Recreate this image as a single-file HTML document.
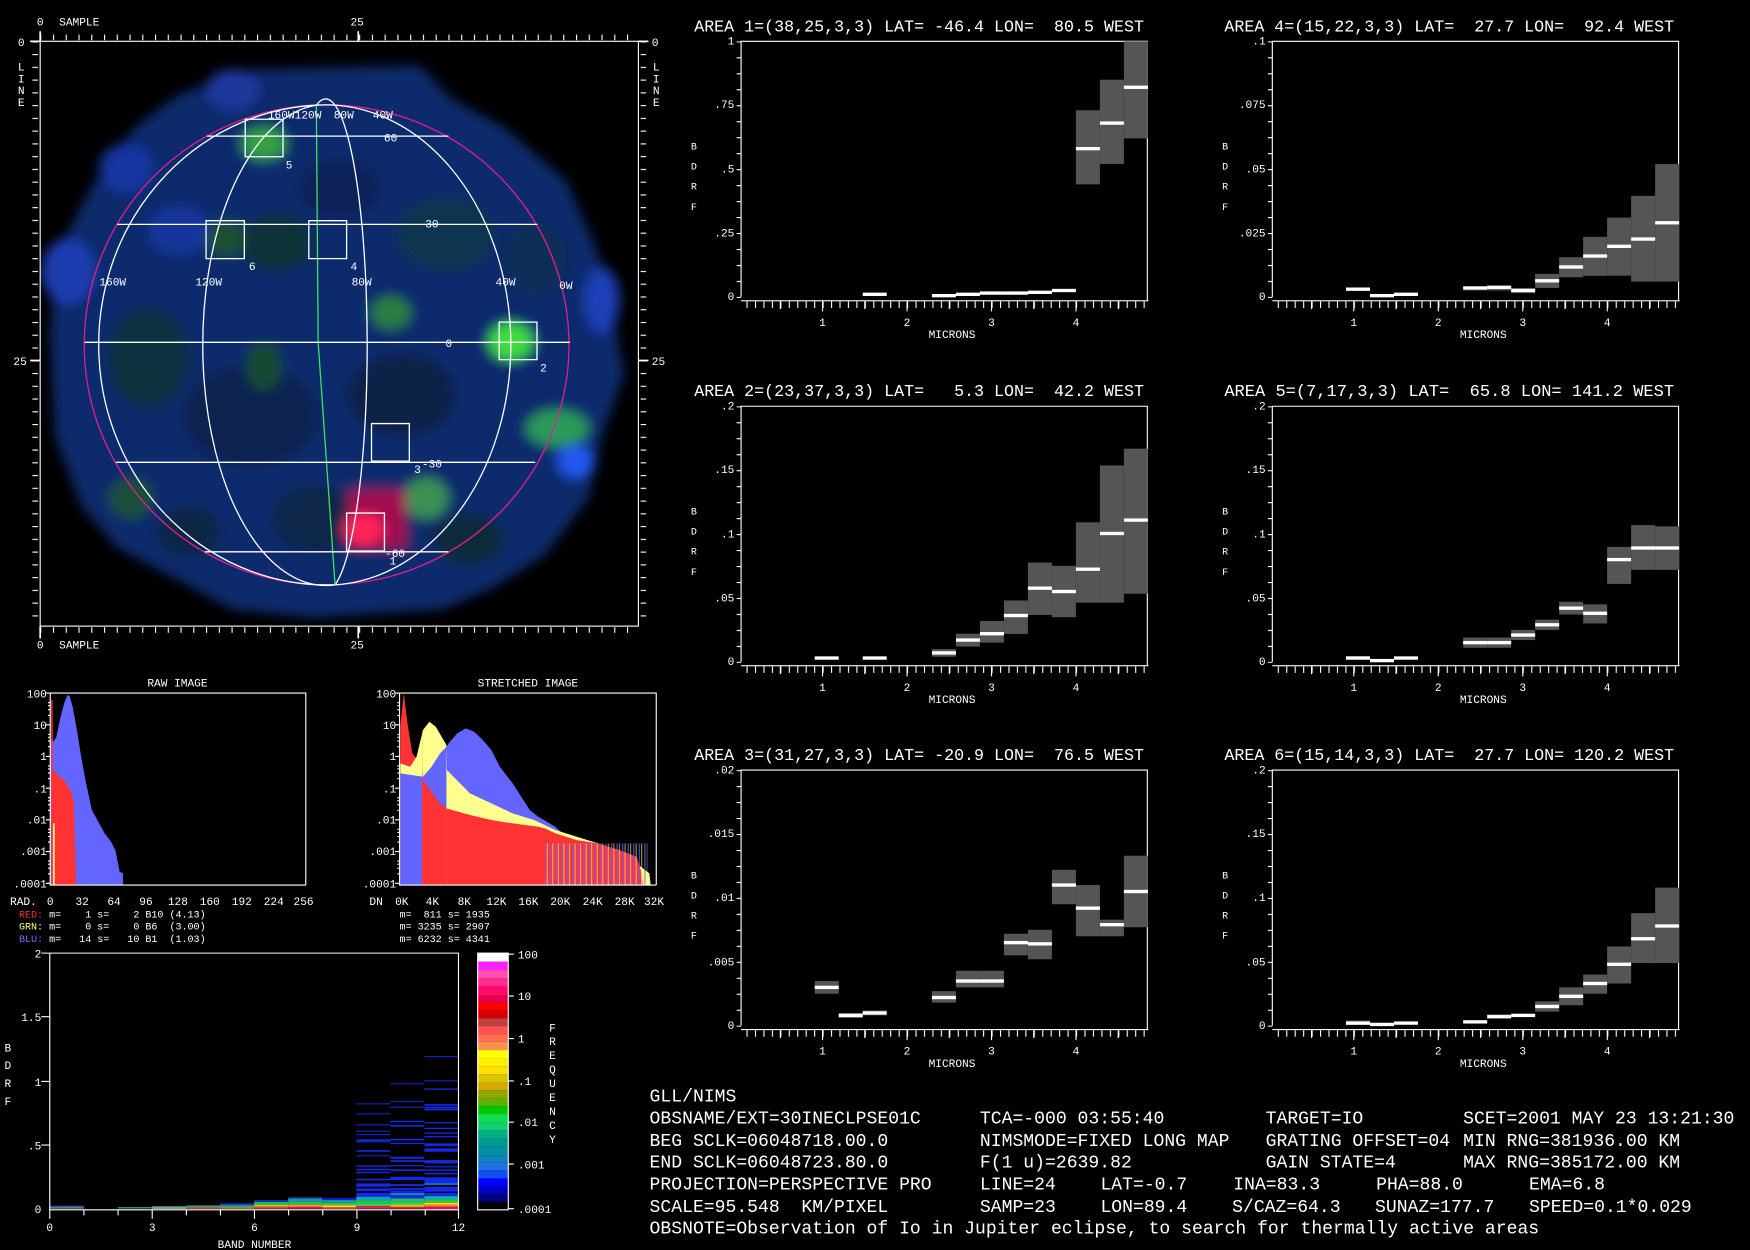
<!DOCTYPE html>
<html><head><meta charset="utf-8"><style>
html,body{margin:0;padding:0;background:#000;width:1750px;height:1250px;overflow:hidden}
svg{display:block}
text{font-family:"Liberation Mono",monospace;fill:#fff;white-space:pre}
.t{font-size:15px}
.s{font-size:10px}
.xs{font-size:9px}
.b{font-size:16.2px}
</style></head><body>
<svg width="1750" height="1250" viewBox="0 0 1568 1120" preserveAspectRatio="none" xmlns="http://www.w3.org/2000/svg">
<defs>
<pattern id="mt" patternUnits="userSpaceOnUse" x="-2.7" y="233" width="7.57" height="10"><rect x="0" y="0" width="1" height="6" fill="#fff"/></pattern>
<pattern id="yt" patternUnits="userSpaceOnUse" x="0" y="0" width="4" height="14.3125"><rect x="0" y="0" width="4" height="1" fill="#fff"/></pattern>
<pattern id="it" patternUnits="userSpaceOnUse" x="36" y="0" width="11.43" height="11.43"><rect x="0" y="0" width="1" height="20" fill="#fff"/></pattern>
<pattern id="il" patternUnits="userSpaceOnUse" x="0" y="37" width="11.43" height="11.43"><rect x="0" y="0" width="20" height="1" fill="#fff"/></pattern>
<pattern id="ht" patternUnits="userSpaceOnUse" x="45" y="0" width="7.15" height="10"><rect x="0" y="0" width="1" height="4" fill="#fff"/></pattern>
<pattern id="ht2" patternUnits="userSpaceOnUse" x="358.5" y="0" width="7.18" height="10"><rect x="0" y="0" width="1" height="4" fill="#fff"/></pattern>
<pattern id="bt" patternUnits="userSpaceOnUse" x="44.6" y="0" width="14.3" height="14.3"><rect x="0" y="0" width="4" height="1" fill="#fff"/></pattern>
<pattern id="nz" patternUnits="userSpaceOnUse" x="0" y="0" width="13" height="10"><rect x="0" y="0" width="3" height="10" fill="#6464ff"/><rect x="6" y="0" width="2" height="10" fill="#ffff90"/></pattern>
<filter id="bl" x="-20%" y="-20%" width="140%" height="140%"><feGaussianBlur stdDeviation="14"/></filter>
<clipPath id="fc"><rect x="36" y="37" width="536" height="524"/></clipPath>
<clipPath id="s1"><rect x="930" y="0" width="58" height="700"/></clipPath>
<clipPath id="s2"><rect x="988" y="0" width="57" height="700"/></clipPath>
<clipPath id="s3"><rect x="1045" y="0" width="500" height="700"/></clipPath>
<path id="R" d="M937,645 L937,170 L945,70 L955,170 L965,250 L975,265 L978,290 L988,300 L990,330 L1010,365 L1030,400 L1045,415 L1100,435 L1150,450 L1200,460 L1260,470 L1275,475 L1300,490 L1350,510 L1400,520 L1450,540 L1490,560 L1500,600 L1505,645 Z" fill="#ff3333"/>
<path id="Y" d="M937,645 L937,280 L960,290 L975,260 L990,180 L1005,155 L1020,170 L1045,225 L1046,300 L1100,370 L1150,400 L1200,430 L1250,450 L1300,480 L1350,500 L1400,520 L1450,550 L1500,590 L1520,610 L1523,645 Z" fill="#ffff90"/>
<path id="B" d="M937,645 L937,310 L990,320 L1010,290 L1030,250 L1045,230 L1050,220 L1070,190 L1090,175 L1110,185 L1130,210 L1150,240 L1170,290 L1200,340 L1220,380 L1240,420 L1260,440 L1300,470 L1350,530 L1400,560 L1450,580 L1500,610 L1510,645 Z" fill="#6464ff"/>
</defs>
<rect width="1568" height="1120" fill="#000"/>

<!-- ================= PLANET IMAGE ================= -->
<g clip-path="url(#fc)">
<g transform="matrix(0.3985,0,0,0.3695,1.33,3.0)">
 <g filter="url(#bl)">
  <path d="M400,220 L560,160 L940,150 L1010,230 L1130,300 L1270,430 L1340,600 L1380,780 L1400,900 L1350,1050 L1320,1200 L1220,1340 L1100,1420 L990,1470 L700,1490 L520,1470 L400,1400 L260,1320 L180,1220 L120,1050 L110,800 L120,620 L200,450 L300,300 Z" fill="#0e2a6c"/>
  <ellipse cx="560" cy="1000" rx="150" ry="120" fill="#0a2250"/>
  <ellipse cx="900" cy="950" rx="120" ry="100" fill="#0a2046"/>
  <ellipse cx="1000" cy="560" rx="110" ry="90" fill="#0e3450"/>
  <ellipse cx="330" cy="860" rx="90" ry="120" fill="#0d3040"/>
  <ellipse cx="620" cy="580" rx="80" ry="70" fill="#0f3038"/>
  <ellipse cx="700" cy="1250" rx="90" ry="80" fill="#0c2848"/>
  <ellipse cx="1050" cy="1300" rx="80" ry="60" fill="#0c2a3a"/>
  <ellipse cx="420" cy="1280" rx="70" ry="60" fill="#0c2844"/>
  <ellipse cx="1200" cy="620" rx="70" ry="90" fill="#0f2f58"/>
  <ellipse cx="760" cy="450" rx="90" ry="70" fill="#0a2258"/>
  <ellipse cx="400" cy="550" rx="70" ry="60" fill="#14349a"/>
  <ellipse cx="150" cy="650" rx="60" ry="80" fill="#1a3cb0"/>
  <ellipse cx="280" cy="400" rx="60" ry="60" fill="#1736a0"/>
  <ellipse cx="520" cy="210" rx="60" ry="50" fill="#1a389c"/>
  <ellipse cx="1350" cy="720" rx="40" ry="80" fill="#1c40b8"/>
  <ellipse cx="590" cy="340" rx="50" ry="40" fill="#36a040"/>
  <ellipse cx="505" cy="570" rx="45" ry="45" fill="#1c5030"/>
  <ellipse cx="1145" cy="820" rx="50" ry="45" fill="#3fdc40"/>
  <ellipse cx="875" cy="750" rx="45" ry="40" fill="#2a7e40"/>
  <ellipse cx="955" cy="1200" rx="50" ry="50" fill="#3a9052"/>
  <ellipse cx="1250" cy="1030" rx="70" ry="45" fill="#2a9a5a"/>
  <ellipse cx="1290" cy="1110" rx="40" ry="40" fill="#2058f0"/>
  <rect x="780" y="1180" width="130" height="140" fill="#a01050"/>
  <ellipse cx="815" cy="1275" rx="45" ry="40" fill="#ff2058"/>
  <ellipse cx="290" cy="1200" rx="50" ry="50" fill="#1a5038"/>
  <ellipse cx="590" cy="880" rx="40" ry="60" fill="#184a30"/>
 </g>
 <g fill="none" stroke="#fff" stroke-width="1.3" vector-effect="non-scaling-stroke">
  <ellipse cx="731" cy="828" rx="545" ry="582" stroke="#e0208a" vector-effect="non-scaling-stroke"/>
  <path d="M708,247 A514,582 0 0 0 750,1410" vector-effect="non-scaling-stroke"/>
  <path d="M708,247 A276,582 0 0 0 750,1410" vector-effect="non-scaling-stroke"/>
  <path d="M708,247 A91,582 0 0 1 750,1410" vector-effect="non-scaling-stroke"/>
  <path d="M708,247 A416,582 0 0 1 750,1410" vector-effect="non-scaling-stroke"/>
  <path d="M708,247 L712,822 L750,1410" stroke="#40e060" vector-effect="non-scaling-stroke"/>
  <path d="M462,322 H1005 M260,536 H1205 M187,822 H1278 M257,1113 H1200 M457,1330 H1005" vector-effect="non-scaling-stroke"/>
  <path d="M548,281 h85 v91 h-85 Z M460,527 h86 v92 h-86 Z M691,527 h85 v92 h-85 Z M1119,773 h85 v91 h-85 Z M832,1019 h85 v91 h-85 Z M776,1236 h85 v92 h-85 Z" vector-effect="non-scaling-stroke"/>
 </g>
</g>
</g>
<g class="s">
 <text x="240" y="106" class="s">160W120W</text><text x="299" y="106" class="s">80W</text><text x="334" y="106" class="s">40W</text>
 <text x="344" y="127" class="s">60</text><text x="381" y="204" class="s">30</text><text x="399" y="311" class="s">0</text><text x="378" y="419" class="s">-30</text><text x="345" y="499" class="s">-60</text>
 <text x="89" y="256" class="s">160W</text><text x="175" y="256" class="s">120W</text><text x="315" y="256" class="s">80W</text><text x="444" y="256" class="s">40W</text><text x="501" y="259" class="s">0W</text>
 <text x="256" y="151" class="s">5</text><text x="223" y="242" class="s">6</text><text x="314" y="242" class="s">4</text><text x="484" y="333" class="s">2</text><text x="371" y="424" class="s">3</text><text x="349" y="506" class="s">1</text>
</g>
<rect x="36" y="37" width="536" height="524" fill="none" stroke="#fff" stroke-width="1"/>
<rect x="36" y="31" width="537" height="5" fill="url(#it)"/>
<rect x="36" y="562" width="537" height="5" fill="url(#it)"/>
<rect x="29" y="37" width="5" height="525" fill="url(#il)"/>
<rect x="574" y="37" width="5" height="525" fill="url(#il)"/>
<path d="M36,37 V28 M321,37 V28 M36,561 V572 M321,561 V572 M36,37 H27 M36,323 H27 M572,37 H581 M572,323 H581" stroke="#fff" stroke-width="1.5"/>
<text x="33" y="23" class="s">0</text><text x="53" y="23" class="s">SAMPLE</text><text x="314" y="23" class="s">25</text>
<text x="33" y="581" class="s">0</text><text x="53" y="581" class="s">SAMPLE</text><text x="314" y="581" class="s">25</text>
<text x="16" y="41" class="s">0</text><text x="12" y="327" class="s">25</text>
<text x="584" y="41" class="s">0</text><text x="584" y="327" class="s">25</text>
<text x="16" y="63" class="s">L</text><text x="16" y="74" class="s">I</text><text x="16" y="84" class="s">N</text><text x="16" y="95" class="s">E</text>
<text x="585" y="63" class="s">L</text><text x="585" y="74" class="s">I</text><text x="585" y="84" class="s">N</text><text x="585" y="95" class="s">E</text>

<!-- ================= HISTOGRAMS ================= -->
<text x="159" y="615" class="s" text-anchor="middle">RAW IMAGE</text>
<text x="473" y="615" class="s" text-anchor="middle">STRETCHED IMAGE</text>
<g transform="matrix(0.3828,0,0,0.2987,0,600.36)">
 <path d="M117,645 L117,210 L125,215 L132,200 L140,150 L150,100 L158,75 L163,78 L170,110 L180,180 L190,260 L200,330 L215,420 L230,455 L245,490 L260,515 L270,540 L280,605 L288,610 L288,645 Z" fill="#6464ff"/>
 <path d="M120,645 L120,90 L123,90 L124,300 L135,315 L150,330 L160,350 L168,370 L173,400 L178,645 Z" fill="#ff3333"/>
 <rect x="124" y="460" width="4" height="185" fill="#ffff90"/>
 <g clip-path="url(#s1)"><use href="#R"/><use href="#Y"/><use href="#B"/></g>
 <g clip-path="url(#s2)"><use href="#Y"/><use href="#B"/><use href="#R"/></g>
 <g clip-path="url(#s3)"><use href="#B"/><use href="#Y"/><use href="#R"/></g>
 <rect x="1275" y="520" width="240" height="125" fill="url(#nz)" opacity="0.75"/>
</g>
<path d="M45,621 H274 V793 M45,621 V793 H274" fill="none" stroke="#fff"/>
<path d="M358,621 H588 V793 M358,621 V793 H588" fill="none" stroke="#fff"/>
<rect x="45" y="794" width="230" height="4" fill="url(#ht)"/>
<rect x="358.5" y="794" width="230" height="4" fill="url(#ht2)"/>
<g stroke="#fff">
 <path d="M41,621h4 M41,649.4h4 M41,677.8h4 M41,706.2h4 M41,734.6h4 M41,763h4 M41,791.4h4 M354,621h4 M354,649.4h4 M354,677.8h4 M354,706.2h4 M354,734.6h4 M354,763h4 M354,791.4h4"/>
 <path d="M43,641h2 M43,635.9h2 M43,632.3h2 M43,629.6h2 M43,669h2 M43,664h2 M43,660.6h2 M43,658h2 M43,697.6h2 M43,692.6h2 M43,689h2 M43,686.3h2 M43,726h2 M43,721h2 M43,717.5h2 M43,714.7h2 M43,754.5h2 M43,749.5h2 M43,745.9h2 M43,743.1h2 M43,782.9h2 M43,777.9h2 M43,774.3h2 M43,771.5h2"/>
 <path d="M356,641h2 M356,635.9h2 M356,632.3h2 M356,629.6h2 M356,669h2 M356,664h2 M356,660.6h2 M356,658h2 M356,697.6h2 M356,692.6h2 M356,689h2 M356,686.3h2 M356,726h2 M356,721h2 M356,717.5h2 M356,714.7h2 M356,754.5h2 M356,749.5h2 M356,745.9h2 M356,743.1h2 M356,782.9h2 M356,777.9h2 M356,774.3h2 M356,771.5h2"/>
</g>
<g class="s" text-anchor="end">
 <text x="42" y="625">100</text><text x="42" y="653">10</text><text x="42" y="681">1</text><text x="42" y="710">.1</text><text x="42" y="738">.01</text><text x="42" y="766">.001</text><text x="42" y="795">.0001</text>
 <text x="355" y="625">100</text><text x="355" y="653">10</text><text x="355" y="681">1</text><text x="355" y="710">.1</text><text x="355" y="738">.01</text><text x="355" y="766">.001</text><text x="355" y="795">.0001</text>
</g>
<g class="s" text-anchor="middle">
 <text x="21" y="811">RAD.</text><text x="45" y="811">0</text><text x="73.6" y="811">32</text><text x="102.2" y="811">64</text><text x="130.8" y="811">96</text><text x="159.4" y="811">128</text><text x="188" y="811">160</text><text x="216.7" y="811">192</text><text x="245.3" y="811">224</text><text x="272" y="811">256</text>
 <text x="337" y="811">DN</text><text x="360" y="811">0K</text><text x="387.4" y="811">4K</text><text x="416" y="811">8K</text><text x="444.8" y="811">12K</text><text x="473.5" y="811">16K</text><text x="502" y="811">20K</text><text x="531" y="811">24K</text><text x="559.7" y="811">28K</text><text x="586" y="811">32K</text>
</g>
<g class="xs">
 <text x="17" y="822"><tspan fill="#ff3030">RED:</tspan> m=    1 s=    2 B10 (4.13)</text>
 <text x="17" y="833"><tspan fill="#ffff80">GRN:</tspan> m=    0 s=    0 B6  (3.00)</text>
 <text x="17" y="844"><tspan fill="#7070ff">BLU:</tspan> m=   14 s=   10 B1  (1.03)</text>
 <text x="358" y="822">m=  811 s= 1935</text>
 <text x="358" y="833">m= 3235 s= 2907</text>
 <text x="358" y="844">m= 6232 s= 4341</text>
</g>

<!-- ================= BAND PLOT ================= -->
<g transform="matrix(0.3429,0,0,0.2987,0,842.3)">
 <g>
  <rect x="1248" y="40" width="80" height="25" fill="#ffffff"/>
  <rect x="1248" y="65" width="80" height="25" fill="#ff20ff"/>
  <rect x="1248" y="90" width="80" height="25" fill="#ff50b0"/>
  <rect x="1248" y="115" width="80" height="25" fill="#ff2a8a"/>
  <rect x="1248" y="140" width="80" height="25" fill="#ff0a6a"/>
  <rect x="1248" y="165" width="80" height="23" fill="#e80050"/>
  <rect x="1248" y="188" width="80" height="22" fill="#ff0000"/>
  <rect x="1248" y="210" width="80" height="25" fill="#d40000"/>
  <rect x="1248" y="235" width="80" height="23" fill="#c04040"/>
  <rect x="1248" y="258" width="80" height="25" fill="#ff5050"/>
  <rect x="1248" y="283" width="80" height="22" fill="#ff7050"/>
  <rect x="1248" y="305" width="80" height="25" fill="#ff9050"/>
  <rect x="1248" y="330" width="80" height="25" fill="#ffff00"/>
  <rect x="1248" y="355" width="80" height="25" fill="#fff000"/>
  <rect x="1248" y="380" width="80" height="22" fill="#ffe000"/>
  <rect x="1248" y="402" width="80" height="25" fill="#d8c800"/>
  <rect x="1248" y="427" width="80" height="23" fill="#d8a800"/>
  <rect x="1248" y="450" width="80" height="25" fill="#90a800"/>
  <rect x="1248" y="475" width="80" height="23" fill="#60b000"/>
  <rect x="1248" y="498" width="80" height="24" fill="#00c800"/>
  <rect x="1248" y="522" width="80" height="25" fill="#10e050"/>
  <rect x="1248" y="547" width="80" height="23" fill="#10d070"/>
  <rect x="1248" y="570" width="80" height="25" fill="#00b080"/>
  <rect x="1248" y="595" width="80" height="25" fill="#009890"/>
  <rect x="1248" y="620" width="80" height="25" fill="#0090a0"/>
  <rect x="1248" y="645" width="80" height="23" fill="#1080c0"/>
  <rect x="1248" y="668" width="80" height="22" fill="#2070e0"/>
  <rect x="1248" y="690" width="80" height="25" fill="#1050f0"/>
  <rect x="1248" y="715" width="80" height="25" fill="#0000ff"/>
  <rect x="1248" y="740" width="80" height="22" fill="#0000c0"/>
  <rect x="1248" y="762" width="80" height="23" fill="#000080"/>
 </g>
 <g fill="#1428e8">
  <rect x="130" y="797" width="89" height="4" fill="#2050f0"/>
  <rect x="130" y="802" width="89" height="3" fill="#b0d080"/>
  <rect x="308" y="801" width="89" height="4" fill="#40a060"/>
  <rect x="397" y="798" width="89" height="4" fill="#2090a0"/>
  <rect x="397" y="802" width="89" height="4" fill="#d0c080"/>
  <rect x="486" y="796" width="89" height="5" fill="#30a070"/>
  <rect x="486" y="801" width="89" height="5" fill="#c06050"/>
  <rect x="575" y="790" width="89" height="6" fill="#1040e0"/>
  <rect x="575" y="796" width="89" height="6" fill="#30b060"/>
  <rect x="575" y="802" width="89" height="4" fill="#d08040"/>
  <rect x="664" y="780" width="89" height="6" fill="#1030c0"/>
  <rect x="664" y="786" width="89" height="8" fill="#20c060"/>
  <rect x="664" y="794" width="89" height="6" fill="#d0d000"/>
  <rect x="664" y="800" width="89" height="6" fill="#e04040"/>
  <rect x="753" y="772" width="89" height="4" fill="#2050d0"/>
  <rect x="753" y="776" width="89" height="10" fill="#10a0a0"/>
  <rect x="753" y="786" width="89" height="8" fill="#30c050"/>
  <rect x="753" y="794" width="89" height="6" fill="#ffa040"/>
  <rect x="753" y="800" width="89" height="6" fill="#e02040"/>
  <rect x="842" y="774" width="89" height="6" fill="#1020e0"/>
  <rect x="842" y="780" width="89" height="8" fill="#10a0b0"/>
  <rect x="842" y="788" width="89" height="8" fill="#40c040"/>
  <rect x="842" y="796" width="89" height="5" fill="#ffe000"/>
  <rect x="842" y="801" width="89" height="5" fill="#ff5050"/>
  <path d="M931,490h89v3h-89z M931,520h89v3h-89z M931,553h89v3h-89z M931,572h89v3h-89z M931,582h89v3h-89z M931,598h89v5h-89z M931,604h89v3h-89z M931,630h89v5h-89z M931,646h89v3h-89z M931,676h89v4h-89z M931,686h89v5h-89z M931,695h89v4h-89z M931,716h89v5h-89z M931,730h89v10h-89z M931,745h89v8h-89z M931,758h89v12h-89z"/>
  <rect x="931" y="770" width="89" height="10" fill="#10a0c0"/>
  <rect x="931" y="780" width="89" height="10" fill="#20c060"/>
  <rect x="931" y="790" width="89" height="8" fill="#40d040"/>
  <rect x="931" y="798" width="89" height="8" fill="#e02060"/>
  <path d="M1020,430h89v3h-89z M1020,483h89v3h-89z M1020,500h89v3h-89z M1020,542h89v4h-89z M1020,555h89v5h-89z M1020,596h89v5h-89z M1020,608h89v4h-89z M1020,650h89v6h-89z M1020,660h89v5h-89z M1020,675h89v4h-89z M1020,688h89v5h-89z M1020,710h89v10h-89z M1020,732h89v6h-89z M1020,744h89v6h-89z M1020,752h89v10h-89z M1020,765h89v10h-89z"/>
  <rect x="1020" y="760" width="89" height="5" fill="#10a0a0"/>
  <rect x="1020" y="775" width="89" height="12" fill="#20c070"/>
  <rect x="1020" y="787" width="89" height="8" fill="#40d040"/>
  <rect x="1020" y="795" width="89" height="5" fill="#ffe000"/>
  <rect x="1020" y="800" width="89" height="6" fill="#e02040"/>
  <path d="M1109,348h89v3h-89z M1109,421h89v3h-89z M1109,445h89v4h-89z M1109,492h89v5h-89z M1109,500h89v5h-89z M1109,506h89v5h-89z M1109,546h89v4h-89z M1109,563h89v4h-89z M1109,577h89v4h-89z M1109,588h89v4h-89z M1109,610h89v8h-89z M1109,625h89v10h-89z M1109,660h89v8h-89z M1109,666h89v4h-89z M1109,678h89v4h-89z M1109,688h89v4h-89z M1109,698h89v5h-89z M1109,712h89v20h-89z M1109,740h89v15h-89z M1109,758h89v10h-89z"/>
  <rect x="1109" y="730" width="89" height="4" fill="#10a0c0"/>
  <rect x="1109" y="768" width="89" height="12" fill="#10b0a0"/>
  <rect x="1109" y="780" width="89" height="8" fill="#30d040"/>
  <rect x="1109" y="788" width="89" height="6" fill="#ffe000"/>
  <rect x="1109" y="794" width="89" height="6" fill="#ff8040"/>
  <rect x="1109" y="800" width="89" height="8" fill="#e0105a"/>
 </g>
</g>
<path d="M44.6,854 H410.8 V1084 M44.6,854 V1084 H410.8" fill="none" stroke="#fff"/>
<rect x="428" y="854" width="27.4" height="230" fill="none" stroke="#fff"/>
<rect x="40.6" y="854" width="4" height="231" fill="url(#bt)"/>
<path d="M37,854h8 M37,911h8 M37,969h8 M37,1026h8 M44.6,1084v8 M75.2,1084v5 M105.8,1084v5 M136.4,1084v8 M167,1084v5 M197.5,1084v5 M228,1084v8 M258.6,1084v5 M289.2,1084v5 M319.8,1084v8 M350.4,1084v5 M381,1084v5 M410.8,1084v8 M455.4,855h5 M455.4,892.5h5 M455.4,930.5h5 M455.4,968.5h5 M455.4,1005.5h5 M455.4,1043h5 M455.4,1083h5" stroke="#fff"/>
<g class="s">
 <text x="37" y="858" text-anchor="end">2</text><text x="37" y="915" text-anchor="end">1.5</text><text x="37" y="973" text-anchor="end">1</text><text x="37" y="1030" text-anchor="end">.5</text><text x="37" y="1087" text-anchor="end">0</text>
 <text x="44.6" y="1103" text-anchor="middle">0</text><text x="136.4" y="1103" text-anchor="middle">3</text><text x="228" y="1103" text-anchor="middle">6</text><text x="319.8" y="1103" text-anchor="middle">9</text><text x="410.8" y="1103" text-anchor="middle">12</text>
 <text x="228" y="1118" text-anchor="middle">BAND NUMBER</text>
 <text x="4" y="942">B</text><text x="4" y="958">D</text><text x="4" y="974">R</text><text x="4" y="990">F</text>
 <text x="464" y="859">100</text><text x="464" y="896">10</text><text x="464" y="934">1</text><text x="464" y="972">.1</text><text x="464" y="1009">.01</text><text x="464" y="1047">.001</text><text x="464" y="1087">.0001</text>
 <text x="492" y="924">F</text><text x="492" y="936.5">R</text><text x="492" y="949">E</text><text x="492" y="961.5">Q</text><text x="492" y="974">U</text><text x="492" y="986.5">E</text><text x="492" y="999">N</text><text x="492" y="1011.5">C</text><text x="492" y="1024">Y</text>
</g>

<!-- ================= SPECTRAL PANELS ================= -->
<g transform="translate(664,37)">
 <text x="-42" y="-9" class="t" textLength="403" lengthAdjust="spacingAndGlyphs">AREA 1=(38,25,3,3) LAT= -46.4 LON=  80.5 WEST</text>
 <path d="M0,229 V0 H364 V232" fill="none" stroke="#fff"/>
 <rect x="0" y="232" width="365" height="1" fill="#fff"/><rect x="0" y="233" width="365" height="6" fill="url(#mt)"/>
 <path d="M73,233v9 M148.7,233v9 M224.4,233v9 M300.1,233v9 M35.15,233v7 M110.85,233v7 M186.55,233v7 M262.25,233v7 M337.95,233v7" stroke="#fff"/>
 <rect x="-4" y="0" width="4" height="230" fill="url(#yt)"/>
 <g class="s"><text x="-6" y="3" text-anchor="end">1</text><text x="-6" y="60" text-anchor="end">.75</text><text x="-6" y="117.5" text-anchor="end">.5</text><text x="-6" y="175" text-anchor="end">.25</text><text x="-6" y="232" text-anchor="end">0</text>
 <text x="73" y="255" text-anchor="middle">1</text><text x="148.7" y="255" text-anchor="middle">2</text><text x="224.4" y="255" text-anchor="middle">3</text><text x="300.1" y="255" text-anchor="middle">4</text><text x="189" y="266" text-anchor="middle">MICRONS</text></g>
 <g class="xs"><text x="-45" y="97">B</text><text x="-45" y="115">D</text><text x="-45" y="133">R</text><text x="-45" y="151">F</text></g>
 <g fill="#555"><rect x="300" y="61.8" width="21.5" height="66.4"/><rect x="321.5" y="34.4" width="21.5" height="75.5"/><rect x="343" y="0" width="21.5" height="87"/></g>
 <g fill="#fff"><rect x="109" y="225.2" width="21.5" height="3"/><rect x="171" y="226.4" width="21.5" height="3"/><rect x="192.5" y="225.2" width="21.5" height="3"/><rect x="214" y="224.1" width="21.5" height="3"/><rect x="235.5" y="224.1" width="21.5" height="3"/><rect x="257" y="223.4" width="21.5" height="3"/><rect x="278.5" y="221.8" width="21.5" height="3"/><rect x="300" y="94.7" width="21.5" height="3"/><rect x="321.5" y="71.8" width="21.5" height="3"/><rect x="343" y="39.7" width="21.5" height="3"/></g>
</g>
<g transform="translate(1140,37)">
 <text x="-43" y="-9" class="t" textLength="403" lengthAdjust="spacingAndGlyphs">AREA 4=(15,22,3,3) LAT=  27.7 LON=  92.4 WEST</text>
 <path d="M0,229 V0 H364 V232" fill="none" stroke="#fff"/>
 <rect x="0" y="232" width="365" height="1" fill="#fff"/><rect x="0" y="233" width="365" height="6" fill="url(#mt)"/>
 <path d="M73,233v9 M148.7,233v9 M224.4,233v9 M300.1,233v9 M35.15,233v7 M110.85,233v7 M186.55,233v7 M262.25,233v7 M337.95,233v7" stroke="#fff"/>
 <rect x="-4" y="0" width="4" height="230" fill="url(#yt)"/>
 <g class="s"><text x="-6" y="3" text-anchor="end">.1</text><text x="-6" y="60" text-anchor="end">.075</text><text x="-6" y="117.5" text-anchor="end">.05</text><text x="-6" y="175" text-anchor="end">.025</text><text x="-6" y="232" text-anchor="end">0</text>
 <text x="73" y="255" text-anchor="middle">1</text><text x="148.7" y="255" text-anchor="middle">2</text><text x="224.4" y="255" text-anchor="middle">3</text><text x="300.1" y="255" text-anchor="middle">4</text><text x="189" y="266" text-anchor="middle">MICRONS</text></g>
 <g class="xs"><text x="-45" y="97">B</text><text x="-45" y="115">D</text><text x="-45" y="133">R</text><text x="-45" y="151">F</text></g>
 <g fill="#555"><rect x="171" y="219.8" width="21.5" height="3.5"/><rect x="192.5" y="218.7" width="21.5" height="4.6"/><rect x="214" y="221" width="21.5" height="4.6"/><rect x="235.5" y="208.4" width="21.5" height="12.6"/><rect x="257" y="193.5" width="21.5" height="17.9"/><rect x="278.5" y="175.2" width="21.5" height="35"/><rect x="300" y="158" width="21.5" height="52"/><rect x="321.5" y="138.5" width="21.5" height="76.8"/><rect x="343" y="109.9" width="21.5" height="105.4"/></g>
 <g fill="#fff"><rect x="66" y="220.6" width="21.5" height="3"/><rect x="87.5" y="226.4" width="21.5" height="3"/><rect x="109" y="225.2" width="21.5" height="3"/><rect x="171" y="219.5" width="21.5" height="3"/><rect x="192.5" y="219" width="21.5" height="3"/><rect x="214" y="221.8" width="21.5" height="3"/><rect x="235.5" y="213.1" width="21.5" height="3"/><rect x="257" y="200.7" width="21.5" height="3"/><rect x="278.5" y="190.9" width="21.5" height="3"/><rect x="300" y="182.2" width="21.5" height="3"/><rect x="321.5" y="175.7" width="21.5" height="3"/><rect x="343" y="161.1" width="21.5" height="3"/></g>
</g>
<g transform="translate(664,364)">
 <text x="-42" y="-9" class="t" textLength="403" lengthAdjust="spacingAndGlyphs">AREA 2=(23,37,3,3) LAT=   5.3 LON=  42.2 WEST</text>
 <path d="M0,229 V0 H364 V232" fill="none" stroke="#fff"/>
 <rect x="0" y="232" width="365" height="1" fill="#fff"/><rect x="0" y="233" width="365" height="6" fill="url(#mt)"/>
 <path d="M73,233v9 M148.7,233v9 M224.4,233v9 M300.1,233v9 M35.15,233v7 M110.85,233v7 M186.55,233v7 M262.25,233v7 M337.95,233v7" stroke="#fff"/>
 <rect x="-4" y="0" width="4" height="230" fill="url(#yt)"/>
 <g class="s"><text x="-6" y="3" text-anchor="end">.2</text><text x="-6" y="60" text-anchor="end">.15</text><text x="-6" y="117.5" text-anchor="end">.1</text><text x="-6" y="175" text-anchor="end">.05</text><text x="-6" y="232" text-anchor="end">0</text>
 <text x="73" y="255" text-anchor="middle">1</text><text x="148.7" y="255" text-anchor="middle">2</text><text x="224.4" y="255" text-anchor="middle">3</text><text x="300.1" y="255" text-anchor="middle">4</text><text x="189" y="266" text-anchor="middle">MICRONS</text></g>
 <g class="xs"><text x="-45" y="97">B</text><text x="-45" y="115">D</text><text x="-45" y="133">R</text><text x="-45" y="151">F</text></g>
 <g fill="#555"><rect x="171" y="217.6" width="21.5" height="6.8"/><rect x="192.5" y="203.8" width="21.5" height="11.5"/><rect x="214" y="192.4" width="21.5" height="19.4"/><rect x="235.5" y="174" width="21.5" height="30"/><rect x="257" y="140" width="21.5" height="47"/><rect x="278.5" y="143" width="21.5" height="46"/><rect x="300" y="104" width="21.5" height="72"/><rect x="321.5" y="53" width="21.5" height="123"/><rect x="343" y="38" width="21.5" height="130"/></g>
 <g fill="#fff"><rect x="66" y="224.1" width="21.5" height="3"/><rect x="109" y="224.1" width="21.5" height="3"/><rect x="171" y="219.5" width="21.5" height="3"/><rect x="192.5" y="208" width="21.5" height="3"/><rect x="214" y="202.3" width="21.5" height="3"/><rect x="235.5" y="186" width="21.5" height="3"/><rect x="257" y="161.5" width="21.5" height="3"/><rect x="278.5" y="164.5" width="21.5" height="3"/><rect x="300" y="144.5" width="21.5" height="3"/><rect x="321.5" y="112.5" width="21.5" height="3"/><rect x="343" y="100.5" width="21.5" height="3"/></g>
</g>
<g transform="translate(1140,364)">
 <text x="-43" y="-9" class="t" textLength="403" lengthAdjust="spacingAndGlyphs">AREA 5=(7,17,3,3) LAT=  65.8 LON= 141.2 WEST</text>
 <path d="M0,229 V0 H364 V232" fill="none" stroke="#fff"/>
 <rect x="0" y="232" width="365" height="1" fill="#fff"/><rect x="0" y="233" width="365" height="6" fill="url(#mt)"/>
 <path d="M73,233v9 M148.7,233v9 M224.4,233v9 M300.1,233v9 M35.15,233v7 M110.85,233v7 M186.55,233v7 M262.25,233v7 M337.95,233v7" stroke="#fff"/>
 <rect x="-4" y="0" width="4" height="230" fill="url(#yt)"/>
 <g class="s"><text x="-6" y="3" text-anchor="end">.2</text><text x="-6" y="60" text-anchor="end">.15</text><text x="-6" y="117.5" text-anchor="end">.1</text><text x="-6" y="175" text-anchor="end">.05</text><text x="-6" y="232" text-anchor="end">0</text>
 <text x="73" y="255" text-anchor="middle">1</text><text x="148.7" y="255" text-anchor="middle">2</text><text x="224.4" y="255" text-anchor="middle">3</text><text x="300.1" y="255" text-anchor="middle">4</text><text x="189" y="266" text-anchor="middle">MICRONS</text></g>
 <g class="xs"><text x="-45" y="97">B</text><text x="-45" y="115">D</text><text x="-45" y="133">R</text><text x="-45" y="151">F</text></g>
 <g fill="#555"><rect x="66" y="224" width="21.5" height="3"/><rect x="171" y="207.2" width="21.5" height="9.2"/><rect x="192.5" y="207.2" width="21.5" height="9.2"/><rect x="214" y="200.4" width="21.5" height="9.1"/><rect x="235.5" y="191.2" width="21.5" height="9.2"/><rect x="257" y="175.2" width="21.5" height="11.4"/><rect x="278.5" y="177.5" width="21.5" height="17.1"/><rect x="300" y="126" width="21.5" height="33.2"/><rect x="321.5" y="106.5" width="21.5" height="40.1"/><rect x="343" y="107.6" width="21.5" height="39"/></g>
 <g fill="#fff"><rect x="66" y="224.1" width="21.5" height="3"/><rect x="87.5" y="226.4" width="21.5" height="3"/><rect x="109" y="224.1" width="21.5" height="3"/><rect x="171" y="210.3" width="21.5" height="3"/><rect x="192.5" y="210.3" width="21.5" height="3"/><rect x="214" y="203.5" width="21.5" height="3"/><rect x="235.5" y="194.3" width="21.5" height="3"/><rect x="257" y="179.4" width="21.5" height="3"/><rect x="278.5" y="184" width="21.5" height="3"/><rect x="300" y="135.9" width="21.5" height="3"/><rect x="321.5" y="125.5" width="21.5" height="3"/><rect x="343" y="125.5" width="21.5" height="3"/></g>
</g>
<g transform="translate(664,690)">
 <text x="-42" y="-9" class="t" textLength="403" lengthAdjust="spacingAndGlyphs">AREA 3=(31,27,3,3) LAT= -20.9 LON=  76.5 WEST</text>
 <path d="M0,229 V0 H364 V232" fill="none" stroke="#fff"/>
 <rect x="0" y="232" width="365" height="1" fill="#fff"/><rect x="0" y="233" width="365" height="6" fill="url(#mt)"/>
 <path d="M73,233v9 M148.7,233v9 M224.4,233v9 M300.1,233v9 M35.15,233v7 M110.85,233v7 M186.55,233v7 M262.25,233v7 M337.95,233v7" stroke="#fff"/>
 <rect x="-4" y="0" width="4" height="230" fill="url(#yt)"/>
 <g class="s"><text x="-6" y="3" text-anchor="end">.02</text><text x="-6" y="60" text-anchor="end">.015</text><text x="-6" y="117.5" text-anchor="end">.01</text><text x="-6" y="175" text-anchor="end">.005</text><text x="-6" y="232" text-anchor="end">0</text>
 <text x="73" y="255" text-anchor="middle">1</text><text x="148.7" y="255" text-anchor="middle">2</text><text x="224.4" y="255" text-anchor="middle">3</text><text x="300.1" y="255" text-anchor="middle">4</text><text x="189" y="266" text-anchor="middle">MICRONS</text></g>
 <g class="xs"><text x="-45" y="97">B</text><text x="-45" y="115">D</text><text x="-45" y="133">R</text><text x="-45" y="151">F</text></g>
 <g fill="#555"><rect x="66" y="189" width="21.5" height="11.4"/><rect x="87.5" y="217.6" width="21.5" height="4.5"/><rect x="109" y="215.3" width="21.5" height="4.5"/><rect x="171" y="198.1" width="21.5" height="10.3"/><rect x="192.5" y="179.8" width="21.5" height="14.9"/><rect x="214" y="179.8" width="21.5" height="14.9"/><rect x="235.5" y="146.6" width="21.5" height="19.4"/><rect x="257" y="143.1" width="21.5" height="26.4"/><rect x="278.5" y="89.3" width="21.5" height="30.9"/><rect x="300" y="103" width="21.5" height="45.9"/><rect x="321.5" y="134" width="21.5" height="14.9"/><rect x="343" y="76.7" width="21.5" height="64.1"/></g>
 <g fill="#fff"><rect x="66" y="193.2" width="21.5" height="3"/><rect x="87.5" y="218.3" width="21.5" height="3"/><rect x="109" y="216.1" width="21.5" height="3"/><rect x="171" y="202.3" width="21.5" height="3"/><rect x="192.5" y="187.5" width="21.5" height="3"/><rect x="214" y="187.5" width="21.5" height="3"/><rect x="235.5" y="153.1" width="21.5" height="3"/><rect x="257" y="154.2" width="21.5" height="3"/><rect x="278.5" y="101.5" width="21.5" height="3"/><rect x="300" y="122.2" width="21.5" height="3"/><rect x="321.5" y="137" width="21.5" height="3"/><rect x="343" y="107.3" width="21.5" height="3"/></g>
</g>
<g transform="translate(1140,690)">
 <text x="-43" y="-9" class="t" textLength="403" lengthAdjust="spacingAndGlyphs">AREA 6=(15,14,3,3) LAT=  27.7 LON= 120.2 WEST</text>
 <path d="M0,229 V0 H364 V232" fill="none" stroke="#fff"/>
 <rect x="0" y="232" width="365" height="1" fill="#fff"/><rect x="0" y="233" width="365" height="6" fill="url(#mt)"/>
 <path d="M73,233v9 M148.7,233v9 M224.4,233v9 M300.1,233v9 M35.15,233v7 M110.85,233v7 M186.55,233v7 M262.25,233v7 M337.95,233v7" stroke="#fff"/>
 <rect x="-4" y="0" width="4" height="230" fill="url(#yt)"/>
 <g class="s"><text x="-6" y="3" text-anchor="end">.2</text><text x="-6" y="60" text-anchor="end">.15</text><text x="-6" y="117.5" text-anchor="end">.1</text><text x="-6" y="175" text-anchor="end">.05</text><text x="-6" y="232" text-anchor="end">0</text>
 <text x="73" y="255" text-anchor="middle">1</text><text x="148.7" y="255" text-anchor="middle">2</text><text x="224.4" y="255" text-anchor="middle">3</text><text x="300.1" y="255" text-anchor="middle">4</text><text x="189" y="266" text-anchor="middle">MICRONS</text></g>
 <g class="xs"><text x="-45" y="97">B</text><text x="-45" y="115">D</text><text x="-45" y="133">R</text><text x="-45" y="151">F</text></g>
 <g fill="#555"><rect x="66" y="224.4" width="21.5" height="4"/><rect x="171" y="224.4" width="21.5" height="2.3"/><rect x="192.5" y="218.7" width="21.5" height="3.4"/><rect x="214" y="218.7" width="21.5" height="2.3"/><rect x="235.5" y="207.2" width="21.5" height="9.2"/><rect x="257" y="194.6" width="21.5" height="16.1"/><rect x="278.5" y="183.2" width="21.5" height="17.2"/><rect x="300" y="158" width="21.5" height="33.2"/><rect x="321.5" y="128.2" width="21.5" height="44.7"/><rect x="343" y="105.3" width="21.5" height="67.6"/></g>
 <g fill="#fff"><rect x="66" y="225.2" width="21.5" height="3"/><rect x="87.5" y="226.4" width="21.5" height="3"/><rect x="109" y="225.2" width="21.5" height="3"/><rect x="171" y="224.1" width="21.5" height="3"/><rect x="192.5" y="219.5" width="21.5" height="3"/><rect x="214" y="218.3" width="21.5" height="3"/><rect x="235.5" y="210.3" width="21.5" height="3"/><rect x="257" y="201.2" width="21.5" height="3"/><rect x="278.5" y="189.7" width="21.5" height="3"/><rect x="300" y="172.5" width="21.5" height="3"/><rect x="321.5" y="149.6" width="21.5" height="3"/><rect x="343" y="138.2" width="21.5" height="3"/></g>
</g>

<!-- ================= INFO TEXT ================= -->
<g class="b">
 <text x="582" y="987">GLL/NIMS</text>
 <text x="582" y="1006.5">OBSNAME/EXT=30INECLPSE01C</text><text x="878" y="1006.5">TCA=-000 03:55:40</text><text x="1134" y="1006.5">TARGET=IO</text><text x="1311" y="1006.5">SCET=2001 MAY 23 13:21:30</text>
 <text x="582" y="1027">BEG SCLK=06048718.00.0</text><text x="878" y="1027">NIMSMODE=FIXED LONG MAP</text><text x="1134" y="1027">GRATING OFFSET=04</text><text x="1311" y="1027">MIN RNG=381936.00 KM</text>
 <text x="582" y="1046">END SCLK=06048723.80.0</text><text x="878" y="1046">F(1 u)=2639.82</text><text x="1134" y="1046">GAIN STATE=4</text><text x="1311" y="1046">MAX RNG=385172.00 KM</text>
 <text x="582" y="1066">PROJECTION=PERSPECTIVE PRO</text><text x="878" y="1066">LINE=24</text><text x="986" y="1066">LAT=-0.7</text><text x="1105" y="1066">INA=83.3</text><text x="1233" y="1066">PHA=88.0</text><text x="1370" y="1066">EMA=6.8</text>
 <text x="582" y="1086">SCALE=95.548  KM/PIXEL</text><text x="878" y="1086">SAMP=23</text><text x="986" y="1086">LON=89.4</text><text x="1104" y="1086">S/CAZ=64.3</text><text x="1232" y="1086">SUNAZ=177.7</text><text x="1370" y="1086">SPEED=0.1*0.029</text>
 <text x="582" y="1105">OBSNOTE=Observation of Io in Jupiter eclipse, to search for thermally active areas</text>
</g>
</svg>
</body></html>
